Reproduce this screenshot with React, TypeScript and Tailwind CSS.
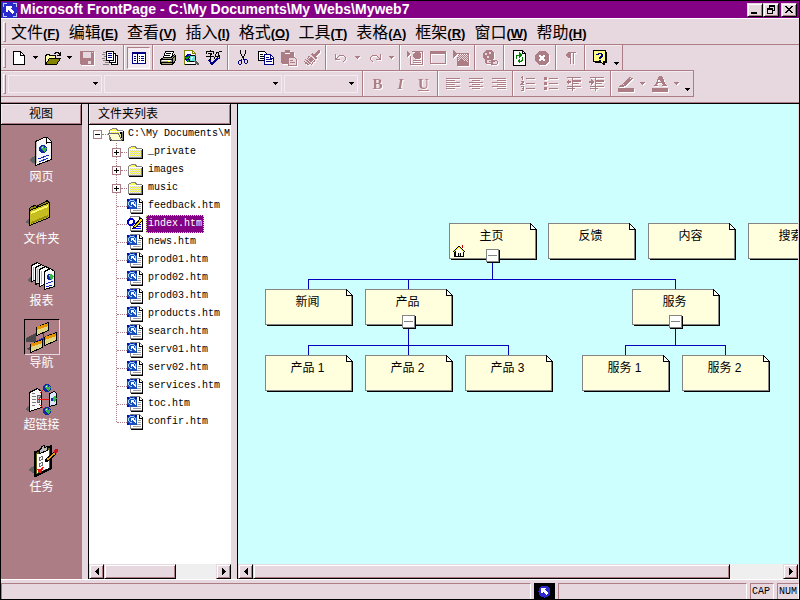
import { ReactNode, useState } from "react";
import clsx from "clsx";

const DIM = "#ad7d86";

type IconProps = { children: ReactNode; dim?: boolean; w?: number; h?: number };

function Icon({ children, dim, w = 16, h = 16 }: IconProps) {
  return (
    <svg
      width={w}
      height={h}
      viewBox={`0 0 ${w} ${h}`}
      shapeRendering="crispEdges"
      fill="none"
      aria-hidden="true"
      className={clsx("shrink-0", dim && "drop-shadow-[1px_1px_0_#ffffff]")}
    >
      {children}
    </svg>
  );
}

/* ---------- toolbar icons ---------- */

const NewIcon = () => (
  <Icon>
    <path d="M2.5 1.5h7l4 4v9h-11z" fill="#fff" stroke="#000" />
    <path d="M9.5 1.5v4h4" stroke="#000" />
  </Icon>
);

const OpenIcon = () => (
  <Icon>
    <path d="M0.5 14.5v-9h1v-1h3v1h6v3" fill="#ffff6b" stroke="#000" />
    <path d="M1 13V6h9v3H5z" fill="#ffffa5" />
    <path d="M0.5 14.5l4-6h11l-4 6z" fill="#848400" stroke="#000" />
    <path d="M9 3h1V2h3v1h1v1h1M15 2v3h-3" stroke="#000" />
  </Icon>
);

const SaveIcon = () => (
  <Icon dim>
    <path d="M1 1h14v14H2l-1-1z" fill={DIM} />
    <path d="M4 2h8v6H4z" fill="#e7d7de" />
    <path d="M9 11h3v3H9zM13 2h1v1h-1z" fill="#e7d7de" />
  </Icon>
);

const PublishIcon = () => (
  <Icon>
    <path d="M9.5 5.5h6v9h-6z" fill="#fff" stroke="#000" />
    <path d="M7.5 3.5h6v9h-6z" fill="#fff" stroke="#000" />
    <path d="M4.5 1.5h7v9h-7z" fill="#fff" stroke="#000" />
    <path d="M6 3.5h4M6 5.5h4M6 7.5h4" stroke="#000084" />
    <path d="M1 2.5h3M0 4.5h3M2 6.5h2M0 8.5h3M1 10.5h3M3 12.5h4M1 14.5h6" stroke="#848484" />
  </Icon>
);

const PanesIcon = () => (
  <Icon>
    <path d="M1.5 2.5h13v11h-13z" fill="#fff" stroke="#000084" />
    <path d="M1 3.5h14M6.5 3v10" stroke="#000084" />
    <path d="M3 6.5h2M3 8.5h2M3 10.5h2M8 6.5h1M10 6.5h3M8 8.5h1M10 8.5h3M8 10.5h1M10 10.5h3" stroke="#000084" />
  </Icon>
);

const PrintIcon = () => (
  <Icon>
    <path d="M3.5 7.5l2-6h8l-2 6z" fill="#fff" stroke="#000" />
    <path d="M6 3.5h5M5 5.5h5" stroke="#000" />
    <path d="M0.5 9.5l3-2h8l3-3 1 1v5l-3 4h-10l-2-1z" fill="#9c9c7b" stroke="#000" />
    <path d="M1 9.5h11M12.5 9v5M1 12.5h11M12 9l3-3" stroke="#000" />
    <path d="M2 10.5h9" stroke="#fff" />
    <path d="M8 11h2v1H8z" fill="#ffff00" />
  </Icon>
);

const PreviewIcon = () => (
  <Icon>
    <path d="M1.5 0.5h8l3 3v11h-11z" fill="#fff" stroke="#848400" />
    <path d="M9.5 0.5v3h3" stroke="#848400" />
    <path d="M2 14.5h11" stroke="#000" />
    <circle cx="6" cy="8" r="4" fill="#0000ad" />
    <path d="M2 7h2l2-2h2v2H6v2H3zM4 10h3v2H5z" fill="#00a500" />
    <circle cx="9.5" cy="8.5" r="3.5" fill="#63dede" stroke="#000" />
    <path d="M8 7h2v1H9v2H8z" fill="#fff" />
    <path d="M12 11l4 4" stroke="#5a5a5a" strokeWidth="2" />
  </Icon>
);

const SpellIcon = () => (
  <Icon>
    <path d="M4 0h1v1h3v3H7V2H1v2H0V1h4zM2 3h4v1L5 5v1h3v1H5v3H3V9h1V7H0V6h4V4H2z" fill="#000" />
    <path d="M8 9l3-7h1l2 7M9 6.5h5M13 2l3-1" stroke="#000" />
    <path d="M3 10l3 4 6-6" stroke="#000084" strokeWidth="2" />
  </Icon>
);

const CutIcon = () => (
  <Icon>
    <path d="M5 0h1v4h1v2h1v2h1v2H8V8H7V6H6V4H5zM10 0h1v4h-1v2H9v2H8V6h1V4h1z" fill="#000" />
    <path d="M6.500 9v2M9.500 9v2" stroke="#000084" />
    <path d="M4 10h2v1h1v3H6v1H4v-1H3v-3h1zm0 1v3h2v-3zM10 9h2v1h1v3h-1v1h-2v-1H9v-3h1zm0 1v3h2v-3z" fill="#000084" fillRule="evenodd" />
  </Icon>
);

const CopyIcon = () => (
  <Icon>
    <path d="M0.5 1.5h6l2 2v7h-8z" fill="#fff" stroke="#000" />
    <path d="M2 4.5h3M2 6.5h5M2 8.5h5" stroke="#000" />
    <path d="M6.5 4.5h6l3 3v7h-9z" fill="#fff" stroke="#000084" />
    <path d="M12.5 5v3h3M8 7.5h3M8 9.5h6M8 11.5h6" stroke="#000084" />
  </Icon>
);

const PasteIcon = () => (
  <Icon dim>
    <path d="M0 2h4V0h5v2h4v12H1l-1-1z" fill={DIM} />
    <path d="M4 3h5v1H4z" fill="#fff" />
    <path d="M7.5 7.5h6l2 2v6h-8z" fill="#e7d7de" stroke={DIM} />
    <path d="M9 10.5h3M9 12.5h5" stroke={DIM} />
  </Icon>
);

const BrushIcon = () => (
  <Icon dim>
    <path d="M10 5l4-5h2v2l-4 5z" fill={DIM} />
    <path d="M7 4l2-1 4 5-1 2z" fill={DIM} />
    <path d="M5 6l6 5-1 1-6-5zM3 8l6 5M1 9l7 6M0 11l5 4" stroke={DIM} />
    <path d="M1 13h1v1H1zM3 14h1v1H3zM8 13h1v1H8z" fill={DIM} />
  </Icon>
);

const UndoIcon = () => (
  <Icon dim>
    <path d="M2 4h1v4h1V7h1V6h1V5h5v1h1v1h1v3h-1v1h-1v1h-1v-1h1v-1h1V7h-1V6H6v1H5v1H4v1h3v1H2z" fill={DIM} />
  </Icon>
);

const RedoIcon = () => (
  <Icon dim>
    <path d="M14 4h-1v4h-1V7h-1V6h-1V5H5v1H4v1H3v3h1v1h1v1h1v-1H5v-1H4V7h1V6h5v1h1v1h1v1H9v1h5z" fill={DIM} />
  </Icon>
);

const ComponentIcon = () => (
  <Icon dim>
    <path d="M0 1l4 3-4 3z" fill={DIM} />
    <path d="M4.5 1.5h11v13h-12V6" stroke={DIM} />
    <path d="M8 2h4l2 2v3l-2 2H8L6 7V4z" fill={DIM} />
    <path d="M6 10.5h8M6 12.5h8" stroke={DIM} />
  </Icon>
);

const FormIcon = () => (
  <Icon dim>
    <path d="M0.5 1.5h15v12H0.5z" stroke={DIM} />
    <path d="M1 2.5h14M1 3.5h14" stroke={DIM} />
  </Icon>
);

const PictureIcon = () => (
  <Icon dim>
    <path d="M0 0l5 4-5 4z" fill={DIM} />
    <path d="M4 3.5h11.500v12H4.500V7" stroke={DIM} />
    <path d="M5 5.5h10M5 7.5h10M5 9.5h10M5 11.5h10M5 13.5h10" stroke={DIM} strokeDasharray="1 1" />
    <path d="M6 4.5h9M6 6.5h9M6 8.5h9M6 10.5h9M6 12.5h9" stroke={DIM} strokeDasharray="1 1" />
    <path d="M5 15v-3l3-3 3 3 1-1 3 3v1z" fill={DIM} />
  </Icon>
);

const LinkIcon = () => (
  <Icon dim>
    <path d="M4 0h5l3 3v5l-3 3H4L1 8V3z" fill={DIM} />
    <path d="M3 3h2v2H3zM7 2h2v2H7zM5 6h2v2H5z" fill="#e7d7de" />
    <path d="M4 9h6v1h5v1h1v3h-1v1H9v-1H4v-1H3v-3h1z" fill={DIM} />
    <path d="M5 10h4v3H5zM11 11h4v3h-4z" fill="#e7d7de" />
    <path d="M7 11.500h6" stroke={DIM} />
  </Icon>
);

const RefreshIcon = () => (
  <Icon>
    <path d="M2.5 0.5h9l3 3v12h-12z" fill="#fff" stroke="#000" />
    <path d="M11.5 0.5v3h3" stroke="#000" />
    <path d="M5.5 9V6l1-1h2" stroke="#008400" />
    <path d="M8 2l3 3-3 3z" fill="#008400" />
    <path d="M11.5 7v3l-1 1h-2" stroke="#008400" />
    <path d="M9 8v6l-3-3z" fill="#008400" />
  </Icon>
);

const StopIcon = () => (
  <Icon dim>
    <path d="M5 1h6l4 4v6l-4 4H5l-4-4V5z" fill={DIM} />
    <path d="M5 5h2v1h2V5h2v2h-1v2h1v2H9v-1H7v1H5V9h1V7H5z" fill="#fff" />
  </Icon>
);

const ParagraphIcon = () => (
  <Icon dim>
    <path d="M5 2h8v1H5z" fill={DIM} />
    <path d="M3 4l2-2h3v6H5L3 6z" fill={DIM} />
    <path d="M7.5 2v12M10.5 2v12" stroke={DIM} />
  </Icon>
);

const HelpIcon = () => (
  <Icon>
    <path d="M3 2h12v11h-2v3l-3-3H3z" fill="#000" />
    <path d="M1.5 0.5h12v11h-2v3l-3-3h-7z" fill="#ffff84" stroke="#000" />
    <path d="M4 4h2V3h4v1h1v3h-1v1H9v1H7V7h1V6h1V4H7v1H4zM7 10h2v1H7z" fill="#000084" />
  </Icon>
);

const AlignLeftIcon = () => (
  <Icon dim>
    <path d="M1 2.5h14M1 4.5h9M1 6.5h14M1 8.5h9M1 10.5h14M1 12.5h9" stroke={DIM} />
  </Icon>
);

const AlignCenterIcon = () => (
  <Icon dim>
    <path d="M1 2.5h14M4 4.5h8M1 6.5h14M4 8.5h8M1 10.5h14M4 12.5h8" stroke={DIM} />
  </Icon>
);

const AlignRightIcon = () => (
  <Icon dim>
    <path d="M1 2.5h14M6 4.5h9M1 6.5h14M6 8.5h9M1 10.5h14M6 12.5h9" stroke={DIM} />
  </Icon>
);

const NumberListIcon = () => (
  <Icon dim>
    <path d="M2.5 0v4M1 1.5h2M1 5.5h2v1l-2 2h3M1 10.5h2v4H1M2 12.5h1" stroke={DIM} />
    <path d="M6 2.5h9M6 7.5h9M6 12.5h9" stroke={DIM} />
  </Icon>
);

const BulletListIcon = () => (
  <Icon dim>
    <path d="M1 1h3v3H1zM1 6h3v3H1zM1 11h3v3H1z" fill={DIM} />
    <path d="M6 2.5h9M6 7.5h9M6 12.5h9" stroke={DIM} />
  </Icon>
);

const OutdentIcon = () => (
  <Icon dim>
    <path d="M0 6l3-3v2h2v2H3v2z" fill={DIM} />
    <path d="M1 1.5h14M7 7.5h6M1 10.5h14M1 12.5h8M6.5 1v14" stroke={DIM} />
    <path d="M7 4h8v2H7z" fill={DIM} />
  </Icon>
);

const IndentIcon = () => (
  <Icon dim>
    <path d="M5 6L2 3v2H0v2h2v2z" fill={DIM} />
    <path d="M1 1.5h14M7 7.5h6M1 10.5h14M1 12.5h8M6.5 1v14" stroke={DIM} />
    <path d="M7 4h8v2H7z" fill={DIM} />
  </Icon>
);

const HighlightIcon = () => (
  <Icon dim>
    <path d="M0 12h16v4H0z" fill={DIM} />
    <path d="M4.5 8.5l7-7 3 1-7 7-4 1z" stroke={DIM} />
    <path d="M10 2l3 1-6 6-2-1zM2 9h2v2H1z" fill={DIM} />
  </Icon>
);

const FontColorIcon = () => (
  <Icon dim>
    <path d="M0 12h16v4H0z" fill={DIM} />
    <path d="M7 0h3l4 9h1v1h-5V9h1l-1-2H6L5 9h1v1H2V9h1zM7 3L6 6h3z" fill={DIM} />
  </Icon>
);

const Caret = ({ dim }: { dim?: boolean }) => (
  <Icon dim={dim} w={5} h={3}>
    <path d="M0 0h5v1H0zM1 1h3v1H1zM2 2h1v1H2z" fill={dim ? DIM : "#000"} />
  </Icon>
);

const AppIcon = () => (
  <Icon>
    <path d="M0 0h16v16H0z" fill="#2929ce" />
    <path d="M1.5 5V1.5H5M11 1.5h3.5V5M1.5 11v3.5H5M11 14.5h3.5V11" stroke="#bdceff" />
    <path d="M4 4h6v2H8l4 4-2 2-4-4v2H4z" fill="#fff" />
  </Icon>
);

/* ---------- tree icons ---------- */

const FolderIcon = ({ open }: { open?: boolean }) => (
  <Icon w={17} h={15}>
    <path d="M15 4h1v10H2v-1h13z" fill="#000" />
    <path d="M1.500 12.500v-9l1-1h1l1-1h4l1 2h5v9z" fill="#ffff5a" stroke="#848484" />
    <path
      d="M3 5.500h11M3 7.500h11M3 9.500h11M3 11.500h11M4 6.500h10M4 8.500h10M4 10.500h10"
      stroke="#d6d6d6"
      strokeDasharray="1 1"
    />
    <path d="M2.500 12V4.500h12" stroke="#fff" />
    {open && (
      <>
        <path d="M3.500 13.500l-3-7h10l3 7z" fill="#ffffce" stroke="#6b6b6b" />
        <path d="M12 5h2v8z" fill="#000" />
      </>
    )}
  </Icon>
);

const PageIcon = ({ editing }: { editing?: boolean }) => (
  <Icon w={17} h={16}>
    <path d="M3.5 0.5h9l3 3v11h-12z" fill="#fff" stroke="#848484" />
    <path d="M15.5 3v12.5H4M12.5 1v3h3" stroke="#000" />
    <path d="M11 6.5h3M11 8.5h3M6 10.5h8M6 12.5h8" stroke={editing ? "#0000ff" : "#9c9c9c"} />
    {editing ? (
      <>
        <circle cx="4" cy="6" r="3" fill="#fff" stroke="#0000ce" strokeWidth="2" />
        <path d="M7 10l7-8 2 2-7 7-3 1z" fill="#ffde00" stroke="#000" />
      </>
    ) : (
      <>
        <path d="M0 1h10v10H0z" fill="#1850bd" />
        <path d="M0 1h2v2H0zM8 1h2v2H8zM0 9h2v2H0zM4 1h2v1H4z" fill="#0010a5" />
        <path d="M3 2h4v1h1v1h1v3H8V4H7V3H3v1H2v3h1v1h2v1H3V8H2V7H1V4h1V3h1z" fill="#a5d6ff" />
        <path d="M4 4h3v1H6l3 3v1H8L5 6v1H4z" fill="#fff" />
      </>
    )}
  </Icon>
);

const Expander = ({ open }: { open?: boolean }) => (
  <Icon w={9} h={9}>
    <path d="M0.5 0.5h8v8h-8z" fill="#fff" stroke={DIM} />
    <path d={open ? "M2 4.5h5" : "M2 4.5h5M4.5 2v5"} stroke="#000" />
  </Icon>
);

/* ---------- view bar icons ---------- */

const Globe = ({ x, y, r }: { x: number; y: number; r: number }) => (
  <g transform={`translate(${x} ${y})`}>
    <circle r={r} fill="#1029a5" />
    <path d={`M-${r - 1} -1l2-2h2v2l-2 2zM0 1l2-3 2 1-1 3-2 1z`} fill="#39b54a" />
    <path d="M-1 -2h1v1h-1z" fill="#bdf7ff" />
  </g>
);

const PageViewIcon = () => (
  <Icon w={32} h={32}>
    <path d="M3 25l7-5v10z" fill="#636363" />
    <path d="M9.5 30.5V6.5l9-4h3l4 4v18z" fill="#f7f7f7" stroke="#000" />
    <path d="M20.5 3v5l5-1" fill="#fff" stroke="#000" />
    <path d="M10.5 7v21" stroke="#bdbdbd" />
    <Globe x={17} y={14} r={4} />
    <path d="M12 24l11-4M13 27l9-4" stroke="#1829ce" />
  </Icon>
);

const FolderViewIcon = () => (
  <Icon w={32} h={32}>
    <path d="M0 25l6-5v8z" fill="#636363" />
    <path d="M4.5 28.5V11.5l2-2 4-1 1 1 11-6 1 2v15z" fill="#8c8c10" stroke="#000" />
    <path d="M4.5 28.5V13.5l20-8v15z" fill="#c6be21" stroke="#000" />
    <path d="M6 15l17-7v2L6 17z" fill="#f7f76b" />
    <path d="M6 25l17-7v2L6 27z" fill="#948c10" />
  </Icon>
);

const ReportsViewIcon = () => (
  <Icon w={32} h={32}>
    <path d="M1 21l5-4v7z" fill="#636363" />
    <path d="M5.5 22.5v-16l6-3 3 2v14z" fill="#fff" stroke="#000" />
    <path d="M9.5 25.5v-17l6-3 3 2v14z" fill="#e7e7e7" stroke="#000" />
    <path d="M13.5 27.5v-17l6-3 4 2v14z" fill="#fff" stroke="#000" />
    <path d="M18.5 30.5v-18l6-3 4 3v15z" fill="#f7f7f7" stroke="#000" />
    <path d="M7.5 8v13M11.5 10v13M15.5 12v13" stroke="#adadad" />
    <Globe x={24} y={18} r={3} />
    <path d="M20 25l7-3M20 28l6-2" stroke="#1829ce" />
  </Icon>
);

const NavViewIcon = () => (
  <Icon w={34} h={34}>
    <path d="M1 18l10-5v9H1zM1 29l6-3v5z" fill="#4a4a4a" />
    <path d="M18 13v7M10 22l14-7M10 20v3M24 14v3" stroke="#2929ef" />
    <path d="M11.5 15.5V7.5l12-5v8z" fill="#ded684" stroke="#000" />
    <path d="M12 7l11-4v3l-11 4z" fill="#e79400" />
    <path d="M5.5 32.5V24.5l12-5v8z" fill="#ded684" stroke="#000" />
    <path d="M6 24l11-4v3L6 27z" fill="#e79400" />
    <path d="M19.5 25.5V17.5l12-5v8z" fill="#ded684" stroke="#000" />
    <path d="M20 17l11-4v3l-11 4z" fill="#e79400" />
  </Icon>
);

const LinksViewIcon = () => (
  <Icon w={32} h={32}>
    <path d="M0 26l5-4v7z" fill="#636363" />
    <path d="M4.5 28.5V9.5l8-4 4 3v16z" fill="#f7f7f7" stroke="#000" />
    <path d="M7 11l3-1M7 14l4-1M7 17l4-1M7 20l4-1M7 23l3-1" stroke="#7b7b7b" />
    <path d="M12 12h3v2h-1v5h-2z" fill="#bdbdbd" stroke="#636363" />
    <path d="M15 10l5-5M13 16.5h11M14 21l6 6" stroke="#ef1010" />
    <Globe x={22} y={5} r={4} />
    <Globe x={22} y={28} r={4} />
    <path d="M24.5 23.5v-13l5-2 2 2v11z" fill="#dee7ff" stroke="#000" />
    <Globe x={28} y={16} r={2} />
  </Icon>
);

const TasksViewIcon = () => (
  <Icon w={32} h={32}>
    <path d="M2 25l7-5v9z" fill="#636363" />
    <path d="M8.5 31.5V7.5l16-6v22z" fill="#5a5a10" stroke="#000" strokeWidth="2" />
    <path d="M11 28V9l12-4v18z" fill="#fff" />
    <path d="M13.5 8.5v-4l2-1v-2l3-1v2l3-1v4z" fill="#bdbdbd" stroke="#000" />
    <path d="M13.5 12.5l3-1v3l-3 1zM13.5 18.5l3-1v3l-3 1z" stroke="#6b6b6b" />
    <path d="M12 24l2 3 3-5" stroke="#ef1010" strokeWidth="2" />
    <path d="M19 15l9-8 2 2-8 7-3 1z" fill="#efa510" stroke="#000" />
    <path d="M19 15l2-1 1 2-3 1z" fill="#000" />
    <circle cx="30" cy="6" r="2" fill="#c61021" />
  </Icon>
);

const HomeIcon = () => (
  <Icon w={12} h={12}>
    <path d="M2 6h1v5h2V8h3v3h2V6h1v6H1V6z" fill="#000" />
    <path d="M3 6l3-3 3 3v5H8V7H5v4H3z" fill="#fff" />
    <path d="M0 6h1V5h1V4h1V3h1V2h1V1h2v1h1v1h1v1h1v1h1v1h1v1h-2V6H9V5H8V4H7V3H5v1H4v1H3v1H2v1H0z" fill="#000" />
    <path d="M1 6h1V5h1V4h1V3h1V2h2v1h1v1h1v1h1v1h1v1h-1V6H9V5H8V4H7V3H5v1H4v1H3v1H2v1H1z" fill="#f7ef00" />
    <path d="M9 0h1v3H9z" fill="#c60000" />
    <path d="M6 8h1v3H6z" fill="#f7ef00" />
  </Icon>
);

/* ---------- data ---------- */

const menus = [
  ["文件", "F"],
  ["编辑", "E"],
  ["查看", "V"],
  ["插入", "I"],
  ["格式", "O"],
  ["工具", "T"],
  ["表格", "A"],
  ["框架", "R"],
  ["窗口", "W"],
  ["帮助", "H"],
];

const views = [
  { label: "网页", icon: <PageViewIcon /> },
  { label: "文件夹", icon: <FolderViewIcon /> },
  { label: "报表", icon: <ReportsViewIcon /> },
  { label: "导航", icon: <NavViewIcon /> },
  { label: "超链接", icon: <LinksViewIcon /> },
  { label: "任务", icon: <TasksViewIcon /> },
];

const folders = ["_private", "images", "music"];

const files = [
  "feedback.htm",
  "index.htm",
  "news.htm",
  "prod01.htm",
  "prod02.htm",
  "prod03.htm",
  "products.htm",
  "search.htm",
  "serv01.htm",
  "serv02.htm",
  "services.htm",
  "toc.htm",
  "confir.htm",
];

type PageNode = { label: string; x: number; y: number; home?: boolean; parent?: boolean };

const nodes: PageNode[] = [
  { label: "主页", x: 211, y: 119, home: true, parent: true },
  { label: "反馈", x: 310, y: 119 },
  { label: "内容", x: 410, y: 119 },
  { label: "搜索", x: 510, y: 119 },
  { label: "新闻", x: 27, y: 185 },
  { label: "产品", x: 127, y: 185, parent: true },
  { label: "服务", x: 394, y: 185, parent: true },
  { label: "产品 1", x: 27, y: 251 },
  { label: "产品 2", x: 127, y: 251 },
  { label: "产品 3", x: 227, y: 251 },
  { label: "服务 1", x: 344, y: 251 },
  { label: "服务 2", x: 444, y: 251 },
];

/* ---------- parts ---------- */

type ToolProps = { label: string; children: ReactNode; pressed?: boolean };

function Tool({ label, children, pressed }: ToolProps) {
  return (
    <button
      aria-label={label}
      className={clsx(
        "flex h-[22px] w-[23px] shrink-0 items-center justify-center",
        pressed && "border border-t-[#ad7d86] border-l-[#ad7d86] border-r-white border-b-white bg-[#f3ebef]"
      )}
    >
      {children}
    </button>
  );
}

function DropTool({ label, dim, low }: { label: string; dim?: boolean; low?: boolean }) {
  return (
    <button
      aria-label={label}
      className={clsx("flex h-[22px] w-[11px] shrink-0 justify-center", low ? "items-end pb-1" : "items-center")}
    >
      <Caret dim={dim} />
    </button>
  );
}

function Separator() {
  return (
    <div className="flex w-[6px] shrink-0 justify-center self-stretch">
      <div className="w-[2px] border-l border-[#ad7d86] border-r border-r-white" />
    </div>
  );
}

function Grip() {
  return (
    <div className="mr-px ml-[2px] h-5 w-[3px] shrink-0 border border-t-white border-l-white border-r-[#ad7d86] border-b-[#ad7d86]" />
  );
}

function Combo({ label, className }: { label: string; className: string }) {
  return (
    <label className={clsx("relative mr-[2px] flex h-[18px] shrink-0 items-center border border-[#f3ebef]", className)}>
      <select aria-label={label} className="h-full w-full appearance-none bg-transparent outline-none" />
      <span className="pointer-events-none absolute right-[3px]">
        <Caret />
      </span>
    </label>
  );
}

function PaneTitle({ children, className }: { children: ReactNode; className?: string }) {
  return (
    <h2
      className={clsx(
        "h-[21px] shrink-0 border-r border-b border-black bg-[#e7d7de] text-[12px] leading-5 font-normal shadow-[inset_1px_1px_0_#f3ebef,inset_-1px_-1px_0_#ad7d86]",
        className
      )}
    >
      {children}
    </h2>
  );
}

const raised =
  "border border-t-[#e7d7de] border-l-[#e7d7de] border-r-black border-b-black bg-[#e7d7de] shadow-[inset_1px_1px_0_#ffffff,inset_-1px_-1px_0_#ad7d86]";

function ScrollBar({ name, thumb }: { name: string; thumb: string }) {
  return (
    <div className="flex h-[15px] shrink-0 bg-[#efefef]">
      <button aria-label={`${name} 向左`} className={clsx("flex w-[15px] shrink-0 items-center justify-center", raised)}>
        <Icon w={4} h={7}>
          <path d="M3 0h1v7H3zM2 1h1v5H2zM1 2h1v3H1zM0 3h1v1H0z" fill="#000" />
        </Icon>
      </button>
      <div className="flex min-w-0 flex-1">
        <div className={clsx(thumb, raised)} />
      </div>
      <button aria-label={`${name} 向右`} className={clsx("flex w-[15px] shrink-0 items-center justify-center", raised)}>
        <Icon w={4} h={7}>
          <path d="M0 0h1v7H0zM1 1h1v5H1zM2 2h1v3H2zM3 3h1v1H3z" fill="#000" />
        </Icon>
      </button>
    </div>
  );
}

function TitleBar() {
  return (
    <header className="flex h-[17px] shrink-0 items-center bg-[#840084] pr-[2px] pl-[1px] text-white">
      <AppIcon />
      <h1 className="ml-[2px] flex-1 truncate text-[14px] leading-[17px] font-bold">
        Microsoft FrontPage - C:\My Documents\My Webs\Myweb7
      </h1>
      <button aria-label="最小化" className={clsx("flex h-[14px] w-4 items-center justify-center", raised)}>
        <Icon w={10} h={10}>
          <path d="M1 7h6v2H1z" fill="#000" />
        </Icon>
      </button>
      <button aria-label="还原" className={clsx("flex h-[14px] w-4 items-center justify-center", raised)}>
        <Icon w={10} h={10}>
          <path d="M3 0h6v2H3zM3 2h1v1H3zM8 2h1v4H7V5h1zM1 3h6v2H1zM1 5h1v4H1zM6 5h1v4H6zM2 8h4v1H2z" fill="#000" />
        </Icon>
      </button>
      <button aria-label="关闭" className={clsx("ml-[2px] flex h-[14px] w-4 items-center justify-center", raised)}>
        <Icon w={10} h={10}>
          <path
            d="M1 1h2v1H1zM2 2h2v1H2zM3 3h2v1H3zM4 4h2v1H4zM3 5h2v1H3zM2 6h2v1H2zM1 7h2v1H1zM7 1h2v1H7zM6 2h2v1H6zM5 3h2v1H5zM5 5h2v1H5zM6 6h2v1H6zM7 7h2v1H7z"
            fill="#000"
          />
        </Icon>
      </button>
    </header>
  );
}

function MenuBar() {
  return (
    <nav className="flex h-[26px] shrink-0 items-center border-t border-white">
      <Grip />
      <div className="ml-1 flex gap-[9px] pt-[3px]">
        {menus.map(([name, key]) => (
          <button key={key} className="text-[16px] leading-[22px] whitespace-nowrap">
            {name}
            <span className="text-[13px] font-bold">
              (<span className="underline">{key}</span>)
            </span>
          </button>
        ))}
      </div>
    </nav>
  );
}

function StandardBar() {
  return (
    <div className="flex h-[26px] w-fit items-center border-t border-r border-[#ad7d86] shadow-[inset_0_1px_0_#f3ebef]">
      <Grip />
      <Tool label="新建"><NewIcon /></Tool>
      <DropTool label="新建选项" />
      <Tool label="打开"><OpenIcon /></Tool>
      <DropTool label="打开选项" />
      <Tool label="保存"><SaveIcon /></Tool>
      <Tool label="发布"><PublishIcon /></Tool>
      <Separator />
      <Tool label="文件夹列表" pressed><PanesIcon /></Tool>
      <Separator />
      <Tool label="打印"><PrintIcon /></Tool>
      <Tool label="预览"><PreviewIcon /></Tool>
      <Tool label="拼写检查"><SpellIcon /></Tool>
      <Separator />
      <Tool label="剪切"><CutIcon /></Tool>
      <Tool label="复制"><CopyIcon /></Tool>
      <Tool label="粘贴"><PasteIcon /></Tool>
      <Tool label="格式刷"><BrushIcon /></Tool>
      <Separator />
      <Tool label="撤消"><UndoIcon /></Tool>
      <DropTool label="撤消列表" dim />
      <Tool label="恢复"><RedoIcon /></Tool>
      <DropTool label="恢复列表" dim />
      <Separator />
      <Tool label="组件"><ComponentIcon /></Tool>
      <Tool label="表格"><FormIcon /></Tool>
      <Tool label="图片"><PictureIcon /></Tool>
      <Separator />
      <Tool label="超链接"><LinkIcon /></Tool>
      <Separator />
      <Tool label="刷新"><RefreshIcon /></Tool>
      <Tool label="停止"><StopIcon /></Tool>
      <Separator />
      <Tool label="显示标记"><ParagraphIcon /></Tool>
      <Separator />
      <Tool label="帮助"><HelpIcon /></Tool>
      <DropTool label="更多按钮" low />
    </div>
  );
}

function FormatBar() {
  const letter = "font-['Liberation_Serif',serif] text-[15px] leading-4 font-bold text-[#ad7d86] drop-shadow-[1px_1px_0_#ffffff]";
  return (
    <div className="flex h-[27px] w-fit items-center border-y border-r border-[#ad7d86] shadow-[inset_0_1px_0_#f3ebef]">
      <Grip />
      <div className="ml-px flex">
        <Combo label="样式" className="w-[94px]" />
        <Combo label="字体" className="w-[178px]" />
        <Combo label="字号" className="w-[74px]" />
      </div>
      <Separator />
      <Tool label="加粗"><span className={letter}>B</span></Tool>
      <Tool label="倾斜"><span className={clsx(letter, "italic")}>I</span></Tool>
      <Tool label="下划线"><span className={clsx(letter, "underline")}>U</span></Tool>
      <Separator />
      <Tool label="左对齐"><AlignLeftIcon /></Tool>
      <Tool label="居中"><AlignCenterIcon /></Tool>
      <Tool label="右对齐"><AlignRightIcon /></Tool>
      <Separator />
      <Tool label="编号"><NumberListIcon /></Tool>
      <Tool label="项目符号"><BulletListIcon /></Tool>
      <Tool label="减少缩进"><OutdentIcon /></Tool>
      <Tool label="增加缩进"><IndentIcon /></Tool>
      <Separator />
      <Tool label="突出显示"><HighlightIcon /></Tool>
      <DropTool label="突出显示颜色" dim />
      <Tool label="字体颜色"><FontColorIcon /></Tool>
      <DropTool label="字体颜色列表" dim />
      <DropTool label="更多格式" low />
    </div>
  );
}

function ViewsBar() {
  const [current, setCurrent] = useState("导航");
  return (
    <aside className="flex w-[81px] shrink-0 flex-col bg-[#ad7d86]">
      <PaneTitle className="text-center">视图</PaneTitle>
      <div className="flex flex-col items-center gap-[10px] pt-2">
        {views.map(({ label, icon }) => (
          <button key={label} onClick={() => setCurrent(label)} className="flex flex-col items-center text-white">
            <span
              className={clsx(
                "flex h-9 w-9 items-center justify-center border",
                current === label
                  ? "border-t-black border-l-black border-r-[#e7d7de] border-b-[#e7d7de]"
                  : "border-transparent"
              )}
            >
              {icon}
            </span>
            <span className="text-[12px] leading-4">{label}</span>
          </button>
        ))}
      </div>
    </aside>
  );
}

function FolderList() {
  const [selected, setSelected] = useState("index.htm");
  return (
    <section className="flex w-[143px] shrink-0 flex-col border-l border-black bg-white">
      <PaneTitle className="pl-[9px]">文件夹列表</PaneTitle>
      <div className="flex-1 overflow-hidden font-['Liberation_Mono','Noto_Sans_CJK_SC',monospace] text-[10px] leading-[18px] whitespace-nowrap">
        <div className="flex h-[18px] items-center pl-1">
          <Expander open />
          <span className="w-[6px] shrink-0 border-t border-dotted border-[#ad7d86]" />
          <FolderIcon open />
          <span className="ml-[3px]">C:\My Documents\M</span>
        </div>
        <ul className="relative ml-[27px] pl-px">
          <span className="absolute top-0 bottom-[9px] left-0 border-l border-dotted border-[#ad7d86]" />
          {folders.map((name) => (
            <li key={name} className="relative -ml-[5px] flex h-[18px] items-center">
              <Expander />
              <span className="w-[6px] shrink-0 border-t border-dotted border-[#ad7d86]" />
              <FolderIcon />
              <span className="ml-1">{name}</span>
            </li>
          ))}
          {files.map((name) => (
            <li key={name} className="flex h-[18px] items-center">
              <span className="w-[10px] shrink-0 border-t border-dotted border-[#ad7d86]" />
              <PageIcon editing={name === "index.htm"} />
              <button
                onClick={() => setSelected(name)}
                className={clsx(
                  "ml-[2px] border border-dotted px-px leading-4",
                  selected === name ? "border-[#c6ef84] bg-[#840084] text-white" : "border-transparent"
                )}
              >
                {name}
              </button>
            </li>
          ))}
        </ul>
      </div>
      <ScrollBar name="文件夹列表" thumb="w-[64%]" />
    </section>
  );
}

function NodeCard({ node }: { node: PageNode }) {
  return (
    <div className="absolute h-[38px] w-[89px]" style={{ left: node.x, top: node.y }}>
      <svg width="89" height="38" viewBox="0 0 89 38" shapeRendering="crispEdges" fill="none" aria-hidden="true" className="absolute">
        <path d="M2 36.5h85.5V6" stroke="#000" />
        <path d="M0.5 0.5h81l5 5v30h-86z" fill="#ffffde" stroke="#848484" />
        <path d="M81.5 0.5v5.5h5.5z" fill="#fff" stroke="#000" />
      </svg>
      <button className="relative block w-[85px] pt-[5px] text-center text-[12px] leading-4 text-black">{node.label}</button>
      {node.home && (
        <span className="absolute bottom-1 left-1">
          <HomeIcon />
        </span>
      )}
      {node.parent && (
        <button
          aria-label={`折叠 ${node.label}`}
          className="absolute top-[26px] left-[37px] flex h-[13px] w-[13px] items-center justify-center border border-[#848484] bg-white shadow-[1px_1px_0_#000000]"
        >
          <span className="h-px w-[9px] bg-[#848484]" />
        </button>
      )}
    </div>
  );
}

function NavigationMap() {
  return (
    <main className="flex min-w-0 flex-1 flex-col border-l border-black bg-[#ceffff]">
      <div className="relative flex-1 overflow-hidden">
        <svg width="600" height="300" viewBox="0 0 600 300" shapeRendering="crispEdges" className="absolute" aria-hidden="true">
          <path
            d="M254.5 156v19M70.5 185v-9.5h367V185M170.5 175v10M170.5 222v29M70.5 251v-9.5h200V251M437.5 222v19M387.5 251v-9.5h100V251"
            fill="none"
            stroke="#0000bd"
          />
        </svg>
        {nodes.map((node) => (
          <NodeCard key={node.label} node={node} />
        ))}
      </div>
      <ScrollBar name="导航" thumb="w-[90%]" />
    </main>
  );
}

function StatusBar() {
  const cell = "border-t border-l border-t-[#ad7d86] border-l-[#ad7d86] border-r border-r-white";
  return (
    <footer className="flex h-4 shrink-0 gap-[3px] font-['Liberation_Mono','Noto_Sans_CJK_SC',monospace] text-[10px] leading-[15px]">
      <div className={clsx("flex-1", cell)} />
      <div className="flex w-[21px] items-center justify-center bg-black">
        <Icon w={13} h={13}>
          <circle cx="6.5" cy="6.5" r="6" fill="#2929ce" />
          <path d="M3 3h5v1H7v1l3 3-2 2-3-3v1H3z" fill="#fff" />
        </Icon>
      </div>
      <div className={clsx("w-[189px]", cell)} />
      <div className={clsx("w-6 px-px", cell)}>CAP</div>
      <div className={clsx("w-[22px] px-px", cell)}>NUM</div>
    </footer>
  );
}

export default function App() {
  return (
    <div className="flex h-screen flex-col overflow-hidden border border-black bg-[#e7d7de] font-['Liberation_Sans','Noto_Sans_CJK_SC',sans-serif] text-black select-none">
      <TitleBar />
      <MenuBar />
      <div className="shrink-0 border-t border-[#ad7d86]">
        <div className="-mt-px">
          <StandardBar />
          <FormatBar />
        </div>
      </div>
      <div className="mt-[5px] h-px shrink-0 bg-[#ad7d86]" />
      <div className="flex min-h-0 flex-1 gap-[6px] border-t border-black pr-px">
        <ViewsBar />
        <FolderList />
        <NavigationMap />
      </div>
      <div className="h-1 shrink-0 border-t border-white" />
      <StatusBar />
    </div>
  );
}
